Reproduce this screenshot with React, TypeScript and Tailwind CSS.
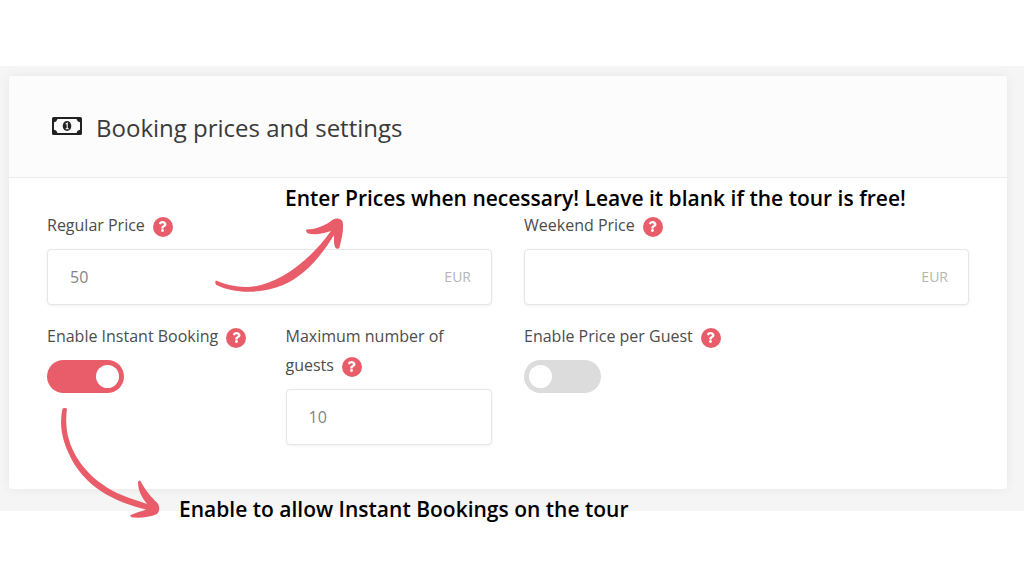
import { useState, ReactNode } from 'react'
import { FaQuestion } from 'react-icons/fa'

function HelpButton({ topic }: { topic: string }) {
  return (
    <button
      type="button"
      aria-label={`Help: ${topic}`}
      className="ml-2 inline-flex size-5 items-center justify-center rounded-full bg-[#e85d69] align-middle text-white"
    >
      <FaQuestion className="size-[11px]" />
    </button>
  )
}

function FieldLabel({ htmlFor, topic, children }: { htmlFor: string; topic: string; children: ReactNode }) {
  return (
    <div className="mb-[9px] text-base leading-[29px] text-[#4c4c4c]">
      <label htmlFor={htmlFor}>{children}</label>
      <HelpButton topic={topic} />
    </div>
  )
}

interface TextFieldProps {
  id: string
  label: string
  value: string
  onChange: (value: string) => void
  unit?: string
  className?: string
}

function TextField({ id, label, value, onChange, unit, className }: TextFieldProps) {
  return (
    <div className={className}>
      <FieldLabel htmlFor={id} topic={label}>{label}</FieldLabel>
      <div className="flex h-14 items-center rounded-sm border border-[#e6e6e6] bg-white px-5 shadow-[0_1px_3px_rgba(0,0,0,0.06)]">
        <input
          id={id}
          value={value}
          onChange={e => onChange(e.target.value)}
          className="w-full min-w-0 flex-1 bg-transparent pl-0.5 text-base text-[#858585] outline-none"
        />
        {unit && <span className="text-sm text-[#b5b5b5]">{unit}</span>}
      </div>
    </div>
  )
}

interface ToggleFieldProps {
  id: string
  label: string
  checked: boolean
  onChange: (checked: boolean) => void
  className?: string
}

function ToggleField({ id, label, checked, onChange, className }: ToggleFieldProps) {
  return (
    <div className={className}>
      <FieldLabel htmlFor={id} topic={label}>{label}</FieldLabel>
      <input
        id={id}
        type="checkbox"
        role="switch"
        checked={checked}
        onChange={e => onChange(e.target.checked)}
        className="block h-[33px] w-[77px] cursor-pointer appearance-none rounded-full bg-[#dcdcdc] p-[5px] before:block before:size-[23px] before:rounded-full before:bg-white checked:bg-[#e85d69] checked:before:ml-auto"
      />
    </div>
  )
}

function MoneyIcon() {
  return (
    <svg viewBox="0 0 30 18" className="h-[18px] w-[30px] shrink-0 text-[#222]" fill="none" aria-hidden="true">
      <rect x="1" y="1" width="28" height="16" rx="0.6" stroke="currentColor" strokeWidth="2" />
      <path d="M1 1h4.5a4 4 0 0 1-4.5 4.2zM29 1h-4.5a4 4 0 0 0 4.5 4.2zM1 17h4.5a4 4 0 0 0-4.5-4.2zM29 17h-4.5a4 4 0 0 1 4.5-4.2z" fill="currentColor" />
      <ellipse cx="15" cy="9" rx="4.3" ry="5.1" fill="currentColor" />
      <path d="M13.7 7.1l1.5-1v5.6M13.6 11.7h3.2" stroke="#fcfcfc" strokeWidth="1.1" />
    </svg>
  )
}

export default function App() {
  const [regularPrice, setRegularPrice] = useState('50')
  const [weekendPrice, setWeekendPrice] = useState('')
  const [maxGuests, setMaxGuests] = useState('10')
  const [instantBooking, setInstantBooking] = useState(true)
  const [pricePerGuest, setPricePerGuest] = useState(false)

  return (
    <div className="min-h-screen bg-white pt-[66px] font-['Open_Sans',sans-serif]">
      <main className="bg-[#f5f5f5] pt-2.5 pr-[17px] pb-[22px] pl-[9px]">
        <section className="relative rounded bg-white shadow-[0_0_12px_rgba(0,0,0,0.06)]">
          <header className="flex h-[102px] items-center gap-[14px] rounded-t border-b border-[#ececec] bg-[#fcfcfc] px-[43px] pb-0.5">
            <MoneyIcon />
            <h1 className="pt-1 text-2xl text-[#3a3a3a]">Booking prices and settings</h1>
          </header>

          <div className="grid grid-cols-4 gap-x-8 gap-y-[17px] px-[38px] pt-[33px] pb-11">
            <TextField
              id="regular-price"
              label="Regular Price"
              value={regularPrice}
              onChange={setRegularPrice}
              unit="EUR"
              className="col-span-2"
            />
            <TextField
              id="weekend-price"
              label="Weekend Price"
              value={weekendPrice}
              onChange={setWeekendPrice}
              unit="EUR"
              className="col-span-2"
            />
            <ToggleField
              id="instant-booking"
              label="Enable Instant Booking"
              checked={instantBooking}
              onChange={setInstantBooking}
            />
            <TextField
              id="max-guests"
              label="Maximum number of guests"
              value={maxGuests}
              onChange={setMaxGuests}
            />
            <ToggleField
              id="price-per-guest"
              label="Enable Price per Guest"
              checked={pricePerGuest}
              onChange={setPricePerGuest}
              className="col-span-2"
            />
          </div>

          {/* Notes and arrows on top of the form */}
          <p className="pointer-events-none absolute top-[108px] left-[276px] text-[21px] leading-7 font-semibold whitespace-nowrap text-black">
            Enter Prices when necessary! Leave it blank if the tour is free!
          </p>
          <svg viewBox="210 210 140 90" className="pointer-events-none absolute top-[134px] left-[201px] h-[90px] w-[140px]" aria-hidden="true">
            <path
              d="M216 280.5C226 285 237 287.5 249 287C277 285 308 263 331 231C323 234 315 235 308 233.5C306.5 232 305.5 230.5 306.5 229.5C317 229.5 326 225 333 219.5C337 217.5 341.5 218.5 342.7 222C344 231 341.5 239 339.5 247.5C338.5 249.5 336 249 335 247C333.5 243 334 239 334 235C320 258 304 276 283 285C262 294 234 294 216.5 285C215 284 215 281 216 280.5Z"
              fill="#e85d69"
            />
          </svg>
          <svg viewBox="55 400 110 125" className="pointer-events-none absolute top-[324px] left-[46px] h-[125px] w-[110px]" aria-hidden="true">
            <path
              d="M62.5 408.5C64 407.5 66.5 408 67 409C62 443 81 469 102 484C115 494 130 498 147 504C141 497 138 489 138 483C138.5 480 140 480 141 482C146 491 151 497 157 502.5C160 506 160 511 157 514C150 517.5 140 518 133 517.5C130 517 129.5 515 132 514.5C137 512.5 142 511 146 509.5C114 502 83 486 69 454C62 439 59 424 62.5 408.5Z"
              fill="#e85d69"
            />
          </svg>
          <p className="pointer-events-none absolute top-[419px] left-[170px] text-[21px] leading-7 font-semibold whitespace-nowrap text-black">
            Enable to allow Instant Bookings on the tour
          </p>
        </section>
      </main>
    </div>
  )
}
